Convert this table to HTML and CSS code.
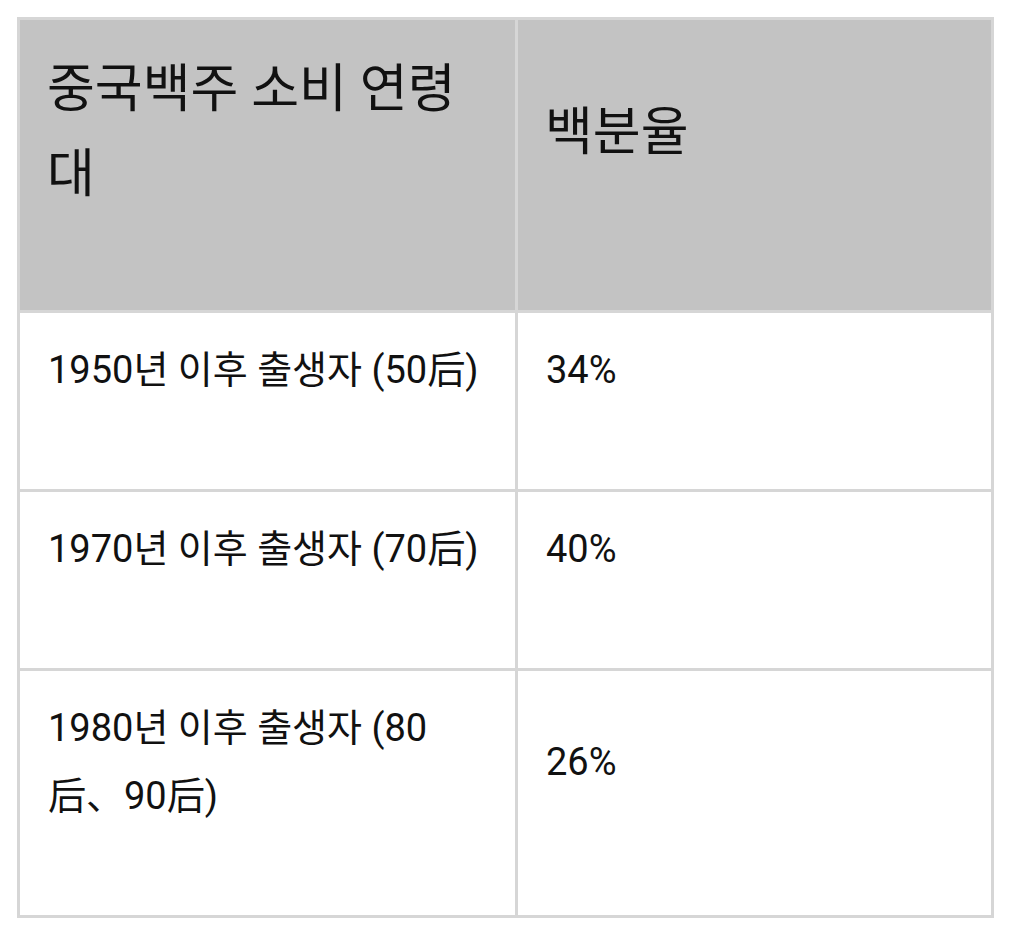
FILE: index.html
```html
<!DOCTYPE html>
<html lang="ko">
<head>
<meta charset="utf-8">
<link rel="stylesheet" href="styles.css">
</head>
<body>
<table class="data">
  <thead>
    <tr>
      <th class="col-a"><p>중국백주 소비 연령대</p></th>
      <th class="col-b"><p>백분율</p></th>
    </tr>
  </thead>
  <tbody>
    <tr>
      <td><p>1950년 이후 출생자 (50后)</p></td>
      <td><p>34%</p></td>
    </tr>
    <tr>
      <td><p>1970년 이후 출생자 (70后)</p></td>
      <td><p>40%</p></td>
    </tr>
    <tr>
      <td><p>1980년 이후 출생자 (80后、90后)</p></td>
      <td><p>26%</p></td>
    </tr>
  </tbody>
</table>
</body>
</html>
```

FILE: styles.css
```css
html, body {
  margin: 0;
  padding: 0;
  background: #ffffff;
}
body {
  padding: 17px 0 0 17px;
  font-family: Roboto, "Noto Sans CJK KR", sans-serif;
  color: #111111;
}
.data {
  border-collapse: collapse;
  width: 977px;
  table-layout: fixed;
}
.data th,
.data td {
  border: 3px solid #d6d6d6;
  vertical-align: middle;
  text-align: left;
  padding: 23px 28px 22px 28px;
}
.col-a { width: 440px; }
.data th {
  background: #c3c3c3;
  font-weight: 400;
  font-size: 52px;
  line-height: 85px;
  padding: 27px 28px 30px 27px;
}
.data td {
  font-size: 38px;
  line-height: 68px;
}
.data p {
  margin: 0 0 63px 0;
}
.data th p {
  margin: 0 0 63px 0;
}
```
